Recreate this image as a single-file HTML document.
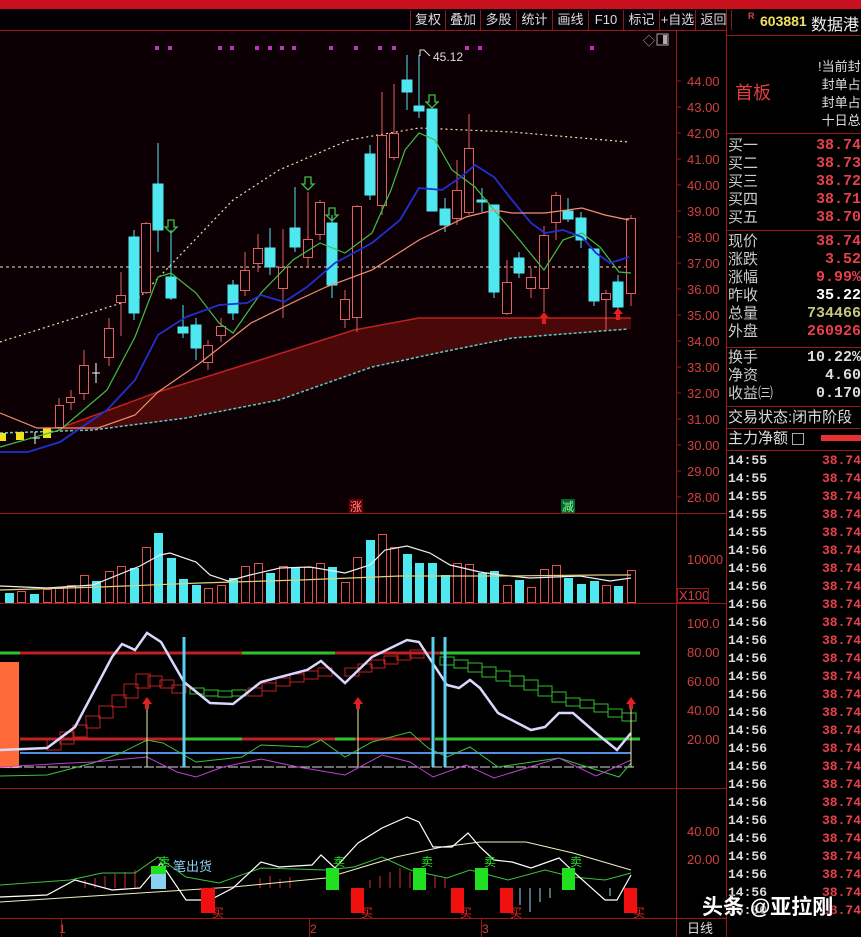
<!DOCTYPE html>
<html><head><meta charset="utf-8"><style>
*{margin:0;padding:0}
body{width:861px;height:937px;background:#000;overflow:hidden;position:relative;font-family:"Liberation Sans","Noto Sans CJK SC",sans-serif}
.t{position:absolute;white-space:nowrap}
.rp{position:absolute;left:728px;width:133px;font-size:15px;color:#ccc;line-height:18px}
.rp span{position:absolute;right:0;color:#e8404a;font-family:"Liberation Mono",monospace;font-weight:bold}
</style></head><body>
<div style="position:absolute;left:0;top:0;width:861px;height:9px;background:#c8101e"></div>
<div style="position:absolute;left:0;top:9px;width:727px;height:21px;background:#050005;border-bottom:1px solid #8a1a1a"></div>
<div class="t" style="left:410px;top:10px;font-size:13px;color:#ddd;line-height:20px">
<span style="display:inline-block;width:34px;text-align:center;border-left:1px solid #8a1a1a">复权</span><span style="display:inline-block;width:34px;text-align:center;border-left:1px solid #8a1a1a">叠加</span><span style="display:inline-block;width:35px;text-align:center;border-left:1px solid #8a1a1a">多股</span><span style="display:inline-block;width:35px;text-align:center;border-left:1px solid #8a1a1a">统计</span><span style="display:inline-block;width:35px;text-align:center;border-left:1px solid #8a1a1a">画线</span><span style="display:inline-block;width:34px;text-align:center;border-left:1px solid #8a1a1a">F10</span><span style="display:inline-block;width:35px;text-align:center;border-left:1px solid #8a1a1a">标记</span><span style="display:inline-block;width:35px;text-align:center;border-left:1px solid #8a1a1a">+自选</span><span style="display:inline-block;width:35px;text-align:center;border-left:1px solid #8a1a1a;border-right:1px solid #8a1a1a">返回</span></div>

<svg style="position:absolute;left:0;top:0" width="727" height="937" font-family="Liberation Sans,Noto Sans CJK SC,sans-serif">
<rect x="0" y="31" width="676" height="482" fill="#0d0004"/>
<g fill="#c030c0"><rect x="155" y="46" width="4" height="4"/><rect x="168" y="46" width="4" height="4"/><rect x="218" y="46" width="4" height="4"/><rect x="230" y="46" width="4" height="4"/><rect x="255" y="46" width="4" height="4"/><rect x="268" y="46" width="4" height="4"/><rect x="280" y="46" width="4" height="4"/><rect x="292" y="46" width="4" height="4"/><rect x="329" y="46" width="4" height="4"/><rect x="354" y="46" width="4" height="4"/><rect x="378" y="46" width="4" height="4"/><rect x="392" y="46" width="4" height="4"/><rect x="465" y="46" width="4" height="4"/><rect x="478" y="46" width="4" height="4"/><rect x="590" y="46" width="4" height="4"/></g>
<text x="643" y="45" fill="#aaa" font-size="12">◇</text><rect x="657" y="34" width="11" height="11" fill="none" stroke="#aaa"/><rect x="663" y="35" width="4" height="9" fill="#aaa"/>
<g stroke="#9a1818" stroke-width="1"><line x1="0" y1="30.5" x2="727" y2="30.5"/><line x1="676.5" y1="31" x2="676.5" y2="918"/><line x1="726.5" y1="9" x2="726.5" y2="937"/><line x1="0" y1="513.5" x2="727" y2="513.5"/><line x1="0" y1="603.5" x2="727" y2="603.5"/><line x1="0" y1="788.5" x2="727" y2="788.5"/><line x1="0" y1="918.5" x2="727" y2="918.5"/></g>
<polygon points="60,428 158,392 260,360 354,330 419,318 631,318 631,329 512,338 442,352 372,367 279,400 186,418 93,430 60,431" fill="#4a0808"/>
<polyline points="60,428 158,392 260,360 354,330 419,318 631,318" fill="none" stroke="#c02020" stroke-width="1.5"/>
<polyline points="0,433 93,430 186,418 279,400 372,367 442,352 512,338 628,329" fill="none" stroke="#5cc8c8" stroke-width="1.5" stroke-dasharray="3,2"/>
<line x1="0" y1="267" x2="632" y2="267" stroke="#f0e0b0" stroke-dasharray="3,3"/>
<polyline points="0,342 140,297 233,200 279,170 349,140 419,128 512,132 628,142" fill="none" stroke="#f0e0b0" stroke-width="1.2" stroke-dasharray="2,3"/>
<g stroke-width="1">
<g fill="#50e8f0" stroke="#50e8f0">
<line x1="158" y1="143" x2="158" y2="252"/><rect x="153" y="184" width="10" height="46"/>
<line x1="134" y1="230" x2="134" y2="320"/><rect x="129" y="237" width="10" height="76"/>
<line x1="171" y1="230" x2="171" y2="300"/><rect x="166" y="277" width="10" height="21"/>
<line x1="183" y1="305" x2="183" y2="338"/><rect x="178" y="327" width="10" height="6"/>
<line x1="196" y1="318" x2="196" y2="360"/><rect x="191" y="325" width="10" height="23"/>
<line x1="233" y1="280" x2="233" y2="320"/><rect x="228" y="285" width="10" height="28"/>
<line x1="270" y1="228" x2="270" y2="275"/><rect x="265" y="248" width="10" height="19"/>
<line x1="295" y1="187" x2="295" y2="252"/><rect x="290" y="228" width="10" height="19"/>
<line x1="332" y1="215" x2="332" y2="298"/><rect x="327" y="223" width="10" height="62"/>
<line x1="370" y1="145" x2="370" y2="200"/><rect x="365" y="154" width="10" height="41"/>
<line x1="407" y1="55" x2="407" y2="110"/><rect x="402" y="80" width="10" height="12"/>
<line x1="419" y1="55" x2="419" y2="118"/><rect x="414" y="106" width="10" height="5"/>
<rect x="427" y="109" width="10" height="102"/>
<line x1="445" y1="198" x2="445" y2="232"/><rect x="440" y="209" width="10" height="16"/>
<line x1="482" y1="188" x2="482" y2="212"/><rect x="477" y="200" width="10" height="2"/>
<line x1="494" y1="205" x2="494" y2="298"/><rect x="489" y="205" width="10" height="87"/>
<line x1="519" y1="252" x2="519" y2="278"/><rect x="514" y="258" width="10" height="15"/>
<line x1="568" y1="198" x2="568" y2="222"/><rect x="563" y="211" width="10" height="8"/>
<line x1="581" y1="212" x2="581" y2="248"/><rect x="576" y="218" width="10" height="22"/>
<line x1="594" y1="249" x2="594" y2="306"/><rect x="589" y="249" width="10" height="52"/>
<line x1="618" y1="275" x2="618" y2="310"/><rect x="613" y="282" width="10" height="25"/>
</g>
<g fill="#0d0004" stroke="#e06060">
<line x1="59" y1="398" x2="59" y2="430"/><rect x="55.5" y="405.5" width="8" height="22"/>
<line x1="71" y1="390" x2="71" y2="410"/><rect x="66.5" y="397.5" width="8" height="5"/>
<line x1="84" y1="350" x2="84" y2="400"/><rect x="79.5" y="365.5" width="9" height="28"/>
<line x1="109" y1="318" x2="109" y2="366"/><rect x="104.5" y="328.5" width="9" height="29"/>
<line x1="121" y1="272" x2="121" y2="336"/><rect x="116.5" y="295.5" width="9" height="7"/>
<line x1="146" y1="222" x2="146" y2="294"/><rect x="141.5" y="223.5" width="9" height="69"/>
<line x1="208" y1="340" x2="208" y2="370"/><rect x="203.5" y="345.5" width="9" height="17"/>
<line x1="221" y1="318" x2="221" y2="342"/><rect x="216.5" y="326.5" width="9" height="9"/>
<line x1="245" y1="252" x2="245" y2="296"/><rect x="240.5" y="270.5" width="9" height="20"/>
<line x1="258" y1="234" x2="258" y2="272"/><rect x="253.5" y="248.5" width="9" height="15"/>
<line x1="283" y1="229" x2="283" y2="318"/><rect x="278.5" y="267.5" width="9" height="21"/>
<line x1="308" y1="192" x2="308" y2="268"/><rect x="303.5" y="239.5" width="9" height="18"/>
<line x1="320" y1="200" x2="320" y2="240"/><rect x="315.5" y="202.5" width="9" height="32"/>
<line x1="345" y1="290" x2="345" y2="328"/><rect x="340.5" y="299.5" width="9" height="20"/>
<line x1="357" y1="205" x2="357" y2="332"/><rect x="352.5" y="206.5" width="9" height="111"/>
<line x1="382" y1="92" x2="382" y2="215"/><rect x="377.5" y="135.5" width="9" height="70"/>
<line x1="394" y1="84" x2="394" y2="160"/><rect x="389.5" y="133.5" width="9" height="24"/>
<line x1="457" y1="160" x2="457" y2="225"/><rect x="452.5" y="190.5" width="9" height="28"/>
<line x1="469" y1="114" x2="469" y2="215"/><rect x="464.5" y="148.5" width="9" height="64"/>
<line x1="507" y1="260" x2="507" y2="315"/><rect x="502.5" y="282.5" width="9" height="31"/>
<line x1="531" y1="268" x2="531" y2="298"/><rect x="526.5" y="277.5" width="9" height="11"/>
<line x1="544" y1="226" x2="544" y2="312"/><rect x="539.5" y="235.5" width="9" height="53"/>
<line x1="556" y1="192" x2="556" y2="240"/><rect x="551.5" y="195.5" width="9" height="27"/>
<line x1="606" y1="290" x2="606" y2="330"/><rect x="601.5" y="293.5" width="9" height="6"/>
<line x1="631" y1="215" x2="631" y2="306"/><rect x="626.5" y="218.5" width="9" height="75"/>
</g>
<g fill="#f0e020"><rect x="0" y="433" width="6" height="8"/><rect x="16" y="432" width="8" height="8"/><rect x="43" y="428" width="8" height="10"/></g>
<line x1="92" y1="373" x2="100" y2="373" stroke="#fff"/><line x1="96" y1="363" x2="96" y2="383" stroke="#fff"/>
<line x1="30" y1="438" x2="40" y2="438" stroke="#fff"/><line x1="35" y1="432" x2="35" y2="444" stroke="#fff"/>
</g>
<polyline points="0,447 60,430 107,390 135,337 158,277 171,273 196,293 219,323 233,333 261,293 293,260 320,243 345,253 372,233 391,190 405,150 419,133 435,140 452,170 475,187 494,210 517,237 544,270 563,240 582,233 600,247 619,272 631,273" fill="none" stroke="#40c040" stroke-width="1.2"/>
<polyline points="0,452 28,452 60,442 107,410 135,380 158,335 186,317 219,305 247,303 261,295 284,302 307,287 335,263 372,243 400,220 419,188 442,190 461,177 475,165 494,177 512,200 531,223 545,233 563,230 582,237 596,253 610,263 629,257" fill="none" stroke="#2030d0" stroke-width="1.8"/>
<polyline points="0,413 37,428 98,428 135,415 158,392 200,363 251,323 298,300 326,287 372,270 419,240 466,217 494,210 512,213 545,213 582,208 605,215 629,220" fill="none" stroke="#f09070" stroke-width="1.2"/>
<g fill="none" stroke="#40c040" stroke-width="1.3"><path d="M168 220v7h-3l6 6 6-6h-3v-7z"/><path d="M305 177v7h-3l6 6 6-6h-3v-7z"/><path d="M329 208v7h-3l6 6 6-6h-3v-7z"/><path d="M429 95v7h-3l6 6 6-6h-3v-7z"/></g>
<g fill="#e02020"><path d="M544 312l-5 6h3v6h4v-6h3z"/><path d="M618 308l-5 6h3v6h4v-6h3z"/></g>
<text x="433" y="61" fill="#ddd" font-size="12">45.12</text><path d="M420 56v-6h4l6 6" fill="none" stroke="#ddd"/>
<rect x="349" y="499" width="14" height="14" fill="#600"/><text x="350" y="511" fill="#f88" font-size="12">涨</text>
<rect x="561" y="499" width="14" height="14" fill="#063"/><text x="562" y="511" fill="#8f8" font-size="12">减</text>
<g fill="#d04040" font-size="13" font-family="Liberation Sans"><text x="687" y="86">44.00</text><text x="687" y="112">43.00</text><text x="687" y="138">42.00</text><text x="687" y="164">41.00</text><text x="687" y="190">40.00</text><text x="687" y="216">39.00</text><text x="687" y="242">38.00</text><text x="687" y="268">37.00</text><text x="687" y="294">36.00</text><text x="687" y="320">35.00</text><text x="687" y="346">34.00</text><text x="687" y="372">33.00</text><text x="687" y="398">32.00</text><text x="687" y="424">31.00</text><text x="687" y="450">30.00</text><text x="687" y="476">29.00</text><text x="687" y="502">28.00</text>
<text x="687" y="564">10000</text><text x="679" y="600">X100</text>
<text x="687" y="628">100.0</text><text x="687" y="657">80.00</text><text x="687" y="686">60.00</text><text x="687" y="715">40.00</text><text x="687" y="744">20.00</text>
<text x="687" y="836">40.00</text><text x="687" y="864">20.00</text></g>
<rect x="677.5" y="588.5" width="31" height="14" fill="none" stroke="#9a1818"/>
<g stroke="#9a1818"><line x1="676" y1="81" x2="681" y2="81"/><line x1="676" y1="107" x2="681" y2="107"/><line x1="676" y1="133" x2="681" y2="133"/><line x1="676" y1="159" x2="681" y2="159"/><line x1="676" y1="185" x2="681" y2="185"/><line x1="676" y1="211" x2="681" y2="211"/><line x1="676" y1="237" x2="681" y2="237"/><line x1="676" y1="263" x2="681" y2="263"/><line x1="676" y1="289" x2="681" y2="289"/><line x1="676" y1="315" x2="681" y2="315"/><line x1="676" y1="341" x2="681" y2="341"/><line x1="676" y1="367" x2="681" y2="367"/><line x1="676" y1="393" x2="681" y2="393"/><line x1="676" y1="419" x2="681" y2="419"/><line x1="676" y1="445" x2="681" y2="445"/><line x1="676" y1="471" x2="681" y2="471"/><line x1="676" y1="497" x2="681" y2="497"/></g>
<g fill="#50e8f0"><rect x="5" y="593" width="9" height="10"/><rect x="30" y="594" width="9" height="9"/><rect x="92" y="581" width="9" height="22"/><rect x="130" y="568" width="9" height="35"/><rect x="154" y="533" width="9" height="70"/><rect x="167" y="558" width="9" height="45"/><rect x="179" y="579" width="9" height="24"/><rect x="192" y="585" width="9" height="18"/><rect x="229" y="578" width="9" height="25"/><rect x="266" y="573" width="9" height="30"/><rect x="291" y="567" width="9" height="36"/><rect x="328" y="567" width="9" height="36"/><rect x="366" y="540" width="9" height="63"/><rect x="403" y="554" width="9" height="49"/><rect x="415" y="563" width="9" height="40"/><rect x="428" y="563" width="9" height="40"/><rect x="441" y="575" width="9" height="28"/><rect x="478" y="573" width="9" height="30"/><rect x="490" y="571" width="9" height="32"/><rect x="515" y="580" width="9" height="23"/><rect x="564" y="578" width="9" height="25"/><rect x="577" y="584" width="9" height="19"/><rect x="590" y="581" width="9" height="22"/><rect x="614" y="586" width="9" height="17"/></g>
<g fill="none" stroke="#e05050"><rect x="17.5" y="591.5" width="8" height="11"/><rect x="43.5" y="589.5" width="8" height="13"/><rect x="55.5" y="588.5" width="8" height="14"/><rect x="67.5" y="585.5" width="8" height="17"/><rect x="80.5" y="575.5" width="8" height="27"/><rect x="105.5" y="571.5" width="8" height="31"/><rect x="117.5" y="566.5" width="8" height="36"/><rect x="142.5" y="547.5" width="8" height="55"/><rect x="204.5" y="588.5" width="8" height="14"/><rect x="217.5" y="585.5" width="8" height="17"/><rect x="241.5" y="566.5" width="8" height="36"/><rect x="254.5" y="563.5" width="8" height="39"/><rect x="279.5" y="566.5" width="8" height="36"/><rect x="304.5" y="567.5" width="8" height="35"/><rect x="316.5" y="563.5" width="8" height="39"/><rect x="341.5" y="582.5" width="8" height="20"/><rect x="353.5" y="557.5" width="8" height="45"/><rect x="378.5" y="534.5" width="8" height="68"/><rect x="390.5" y="547.5" width="8" height="55"/><rect x="453.5" y="563.5" width="8" height="39"/><rect x="465.5" y="564.5" width="8" height="38"/><rect x="503.5" y="585.5" width="8" height="17"/><rect x="527.5" y="587.5" width="8" height="15"/><rect x="540.5" y="569.5" width="8" height="33"/><rect x="552.5" y="565.5" width="8" height="37"/><rect x="602.5" y="585.5" width="8" height="17"/><rect x="627.5" y="570.5" width="8" height="32"/></g>
<polyline points="0,586 47,588 93,585 140,566 160,555 170,553 196,562 210,575 228,581 250,575 280,568 310,567 345,573 370,565 385,550 407,546 430,553 450,565 480,572 500,575 530,578 580,576 610,581 631,578" fill="none" stroke="#eee" stroke-width="1.2"/>
<polyline points="0,590 100,587 200,583 300,580 400,576 500,576 600,575 631,575" fill="none" stroke="#e0d080" stroke-width="1.2"/>
<rect x="0" y="662" width="19" height="106" fill="#ff6a3a"/>
<g stroke-width="3"><line x1="0" y1="653" x2="20" y2="653" stroke="#30c030"/><line x1="20" y1="653" x2="242" y2="653" stroke="#c02020"/><line x1="242" y1="653" x2="335" y2="653" stroke="#30c030"/><line x1="335" y1="653" x2="440" y2="653" stroke="#c02020"/><line x1="440" y1="653" x2="640" y2="653" stroke="#30c030"/>
<line x1="20" y1="739" x2="185" y2="739" stroke="#c02020"/><line x1="185" y1="739" x2="242" y2="739" stroke="#30c030"/><line x1="242" y1="739" x2="335" y2="739" stroke="#c02020"/><line x1="335" y1="739" x2="355" y2="739" stroke="#30c030"/><line x1="355" y1="739" x2="430" y2="739" stroke="#c02020"/><line x1="435" y1="739" x2="640" y2="739" stroke="#30c030"/></g>
<line x1="20" y1="753" x2="631" y2="753" stroke="#5090e0" stroke-width="2"/>
<line x1="0" y1="767" x2="636" y2="767" stroke="#ddd" stroke-dasharray="10,2"/>
<g fill="none" stroke="#c02020"><rect x="47" y="738" width="14" height="12"/><rect x="60" y="732" width="14" height="12"/><rect x="73" y="725" width="14" height="12"/><rect x="86" y="716" width="14" height="12"/><rect x="99" y="706" width="14" height="12"/><rect x="112" y="695" width="14" height="12"/><rect x="124" y="684" width="14" height="14"/><rect x="136" y="674" width="14" height="14"/><rect x="148" y="676" width="14" height="10"/><rect x="160" y="680" width="14" height="8"/><rect x="172" y="685" width="14" height="8"/><rect x="248" y="688" width="14" height="8"/><rect x="262" y="683" width="14" height="8"/><rect x="276" y="678" width="14" height="8"/><rect x="290" y="674" width="14" height="8"/><rect x="304" y="671" width="14" height="8"/><rect x="318" y="668" width="14" height="8"/><rect x="345" y="668" width="14" height="8"/><rect x="358" y="664" width="14" height="8"/><rect x="371" y="660" width="14" height="8"/><rect x="384" y="656" width="14" height="8"/><rect x="397" y="652" width="14" height="8"/><rect x="410" y="650" width="14" height="8"/></g>
<g fill="none" stroke="#30c030"><rect x="190" y="688" width="14" height="6"/><rect x="204" y="690" width="14" height="6"/><rect x="218" y="691" width="14" height="6"/><rect x="232" y="690" width="14" height="6"/><rect x="440" y="657" width="14" height="8"/><rect x="454" y="660" width="14" height="8"/><rect x="468" y="663" width="14" height="9"/><rect x="482" y="667" width="14" height="10"/><rect x="496" y="671" width="14" height="10"/><rect x="510" y="676" width="14" height="10"/><rect x="524" y="680" width="14" height="10"/><rect x="538" y="686" width="14" height="10"/><rect x="552" y="692" width="14" height="10"/><rect x="566" y="698" width="14" height="8"/><rect x="580" y="700" width="14" height="8"/><rect x="594" y="704" width="14" height="8"/><rect x="608" y="709" width="14" height="8"/><rect x="622" y="713" width="14" height="8"/></g>
<polyline points="0,776 47,775 93,763 121,753 147,740 163,743 196,762 242,757 261,745 307,747 321,740 345,757 372,742 410,732 428,748 447,757 470,747 498,767 559,758 619,777 631,763" fill="none" stroke="#40c040"/>
<polyline points="0,767 70,763 93,762 147,757 177,772 196,777 223,767 261,759 298,767 345,775 382,755 410,762 433,777 466,765 494,778 559,758 596,776 631,760" fill="none" stroke="#c040d0"/>
<polyline points="0,750 47,748 75,727 112,657 122,644 135,650 147,633 161,642 184,682 210,703 233,704 261,682 307,670 321,661 345,683 372,657 407,640 419,642 447,685 459,688 470,680 480,688 498,713 531,730 545,727 559,713 573,713 596,733 617,750 631,733" fill="none" stroke="#d8d8ff" stroke-width="2.5"/>
<g stroke="#5ad0f0" stroke-width="3"><line x1="184" y1="637" x2="184" y2="767"/><line x1="433" y1="637" x2="433" y2="767"/><line x1="445" y1="637" x2="445" y2="767"/></g>
<g stroke="#f0f0a0"><line x1="147" y1="705" x2="147" y2="767"/><line x1="358" y1="705" x2="358" y2="767"/><line x1="631" y1="705" x2="631" y2="767"/></g>
<g fill="#e02020"><path d="M147 697l-5 7h3v5h4v-5h3z"/><path d="M358 697l-5 7h3v5h4v-5h3z"/><path d="M631 697l-5 7h3v5h4v-5h3z"/></g>
<g stroke="#d03030"><line x1="85" y1="880" x2="85" y2="888"/><line x1="95" y1="878" x2="95" y2="888"/><line x1="105" y1="876" x2="105" y2="888"/><line x1="115" y1="874" x2="115" y2="888"/><line x1="125" y1="872" x2="125" y2="888"/><line x1="135" y1="870" x2="135" y2="888"/><line x1="260" y1="878" x2="260" y2="888"/><line x1="270" y1="876" x2="270" y2="888"/><line x1="280" y1="879" x2="280" y2="888"/><line x1="290" y1="877" x2="290" y2="888"/><line x1="370" y1="880" x2="370" y2="888"/><line x1="380" y1="876" x2="380" y2="888"/><line x1="390" y1="872" x2="390" y2="888"/><line x1="400" y1="868" x2="400" y2="888"/><line x1="410" y1="872" x2="410" y2="888"/><line x1="435" y1="875" x2="435" y2="888"/><line x1="445" y1="878" x2="445" y2="888"/></g>
<g stroke="#9ad8f0"><line x1="520" y1="888" x2="520" y2="905"/><line x1="530" y1="888" x2="530" y2="912"/><line x1="540" y1="888" x2="540" y2="902"/><line x1="550" y1="888" x2="550" y2="898"/><line x1="610" y1="888" x2="610" y2="896"/></g>
<polyline points="0,885 70,880 102,873 135,873 158,857 186,877 219,883 261,868 326,870 354,867 382,857 410,870 447,878 470,870 508,880 545,870 573,877 605,880 631,873" fill="none" stroke="#40c040"/>
<polyline points="0,902 140,893 233,887 326,878 396,857 442,847 480,842 526,842 573,853 631,870" fill="none" stroke="#f0f0c0"/>
<polyline points="0,897 47,895 75,880 112,890 140,888 161,863 186,900 210,900 233,888 261,862 279,867 312,865 321,855 335,868 358,843 382,828 407,817 419,822 433,847 452,847 468,833 480,847 494,860 512,862 531,868 559,858 577,875 605,900 617,900 631,875" fill="none" stroke="#fff" stroke-width="1.2"/>
<rect x="151" y="866" width="15" height="10" fill="#20e020"/><rect x="151" y="874" width="15" height="15" fill="#8ad0f0"/>
<g fill="#20e020"><rect x="326" y="868" width="13" height="22"/><rect x="413" y="868" width="13" height="22"/><rect x="475" y="868" width="13" height="22"/><rect x="562" y="868" width="13" height="22"/></g>
<g fill="#f01010"><rect x="201" y="888" width="14" height="25"/><rect x="351" y="888" width="13" height="25"/><rect x="451" y="888" width="13" height="25"/><rect x="500" y="888" width="13" height="25"/><rect x="624" y="888" width="13" height="25"/></g>
<g fill="#20e020" font-size="12"><text x="158" y="866">卖</text><text x="333" y="866">卖</text><text x="421" y="866">卖</text><text x="484" y="866">卖</text><text x="570" y="866">卖</text></g>
<text x="173" y="871" fill="#8ad0f0" font-size="13">笔出货</text>
<g fill="#f02020" font-size="12"><text x="212" y="917">买</text><text x="361" y="917">买</text><text x="460" y="917">买</text><text x="510" y="917">买</text><text x="633" y="917">买</text></g>
<g fill="#d04040" font-size="12"><text x="59" y="933">1</text><text x="310" y="933">2</text><text x="482" y="933">3</text></g>
<g stroke="#9a1818"><line x1="61.5" y1="919" x2="61.5" y2="937"/><line x1="309.5" y1="919" x2="309.5" y2="937"/><line x1="481.5" y1="919" x2="481.5" y2="937"/><line x1="676.5" y1="919" x2="676.5" y2="937"/></g>
<text x="687" y="933" fill="#ddd" font-size="13">日线</text>
</svg>

<div class="t" style="left:748px;top:11px;font-size:9px;color:#e04040;font-weight:bold">R</div>
<div class="t" style="left:760px;top:13px;font-size:14px;color:#f0e060;font-weight:bold">603881</div>
<div class="t" style="left:811px;top:11px;font-size:16px;color:#eee">数据港</div>
<div style="position:absolute;left:727px;top:35px;width:134px;height:1px;background:#9a1818"></div>
<div class="t" style="left:735px;top:79px;font-size:18px;color:#e04040">首板</div>
<div class="t" style="left:818px;top:58px;font-size:13px;color:#ddd;line-height:18px">ǃ当前封<br>&nbsp;封单占<br>&nbsp;封单占<br>&nbsp;十日总</div>
<div style="position:absolute;left:727px;top:133px;width:134px;height:1px;background:#9a1818"></div>
<div class="rp" style="top:137px">买一<span>38.74</span><br>买二<span style="top:18px">38.73</span><br>买三<span style="top:36px">38.72</span><br>买四<span style="top:54px">38.71</span><br>买五<span style="top:72px">38.70</span></div>
<div style="position:absolute;left:727px;top:230px;width:134px;height:1px;background:#9a1818"></div>
<div class="rp" style="top:233px">现价<span>38.74</span><br>涨跌<span style="top:18px">3.52</span><br>涨幅<span style="top:36px">9.99%</span><br>昨收<span style="top:54px;color:#fff">35.22</span><br>总量<span style="top:72px;color:#c8c880">734466</span><br>外盘<span style="top:90px">260926</span></div>
<div style="position:absolute;left:727px;top:347px;width:134px;height:1px;background:#9a1818"></div>
<div class="rp" style="top:349px">换手<span style="color:#ddd">10.22%</span><br>净资<span style="top:18px;color:#ddd">4.60</span><br>收益㈢<span style="top:36px;color:#ddd">0.170</span></div>
<div style="position:absolute;left:727px;top:406px;width:134px;height:1px;background:#9a1818"></div>
<div class="rp" style="top:409px;color:#ddd">交易状态:闭市阶段</div>
<div style="position:absolute;left:727px;top:428px;width:134px;height:1px;background:#9a1818"></div>
<div class="rp" style="top:430px;color:#ddd">主力净额 <b style="display:inline-block;width:10px;height:10px;border:1px solid #aaa;vertical-align:middle"></b></div>
<div style="position:absolute;left:821px;top:435px;width:40px;height:6px;background:#e83030"></div>
<div style="position:absolute;left:727px;top:450px;width:134px;height:1px;background:#9a1818"></div>
<div class="rp" style="top:452px;font-family:'Liberation Mono',monospace;font-weight:bold;font-size:13px;color:#ddd">
14:55<span style="top:0">38.74</span><br>14:55<span style="top:18px">38.74</span><br>14:55<span style="top:36px">38.74</span><br>14:55<span style="top:54px">38.74</span><br>14:55<span style="top:72px">38.74</span><br>14:56<span style="top:90px">38.74</span><br>14:56<span style="top:108px">38.74</span><br>14:56<span style="top:126px">38.74</span><br>14:56<span style="top:144px">38.74</span><br>14:56<span style="top:162px">38.74</span><br>14:56<span style="top:180px">38.74</span><br>14:56<span style="top:198px">38.74</span><br>14:56<span style="top:216px">38.74</span><br>14:56<span style="top:234px">38.74</span><br>14:56<span style="top:252px">38.74</span><br>14:56<span style="top:270px">38.74</span><br>14:56<span style="top:288px">38.74</span><br>14:56<span style="top:306px">38.74</span><br>14:56<span style="top:324px">38.74</span><br>14:56<span style="top:342px">38.74</span><br>14:56<span style="top:360px">38.74</span><br>14:56<span style="top:378px">38.74</span><br>14:56<span style="top:396px">38.74</span><br>14:56<span style="top:414px">38.74</span><br>14:56<span style="top:432px">38.74</span><br>15:00<span style="top:450px">38.74</span></div>
<div class="t" style="left:702px;top:891px;font-size:21px;color:#fff;font-weight:bold;text-shadow:0 0 3px #000">头条 @亚拉刚</div>
</body></html>
